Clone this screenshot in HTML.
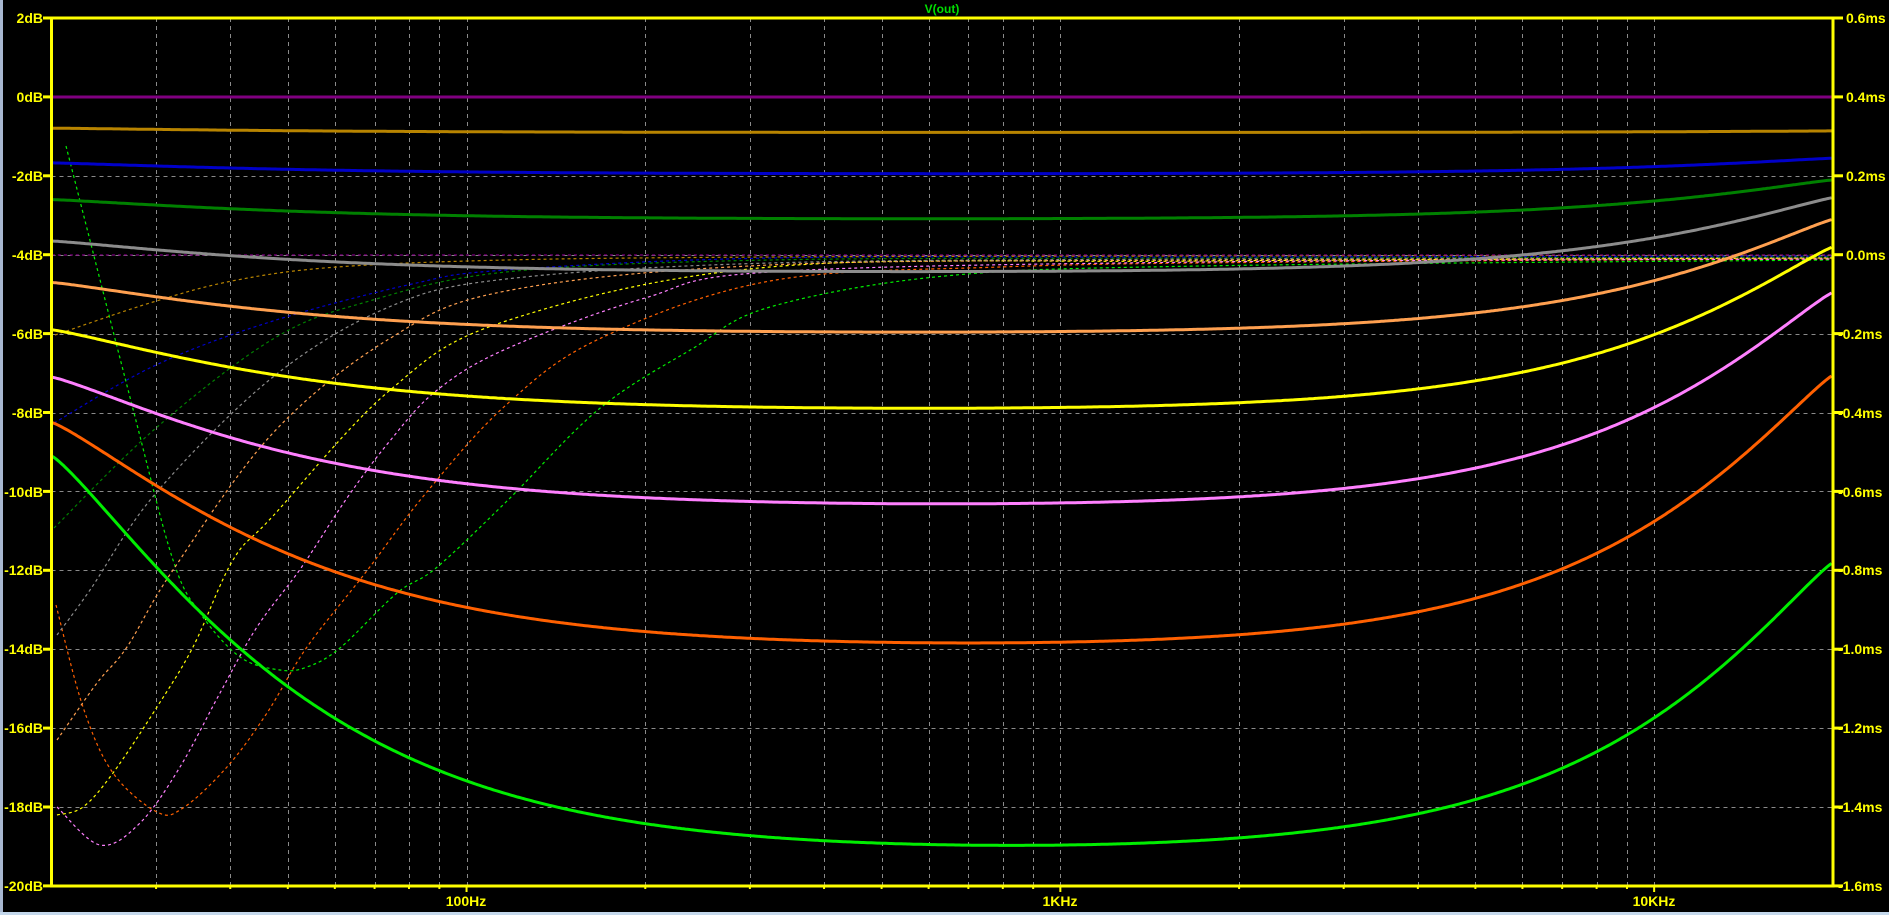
<!DOCTYPE html>
<html><head><meta charset="utf-8">
<style>
html,body{margin:0;padding:0;background:#000;width:1889px;height:915px;overflow:hidden}
svg{display:block}
text{font-family:"Liberation Sans",sans-serif;font-weight:bold}
</style></head><body>
<svg id="s" width="1889" height="915" viewBox="0 0 1889 915" xmlns="http://www.w3.org/2000/svg">
<rect width="1889" height="915" fill="#000"/>
<rect x="0" y="0" width="3" height="915" fill="#a8b8d0"/>
<rect x="0" y="912" width="1889" height="3" fill="#c4d8ec"/>
<g id="grid" stroke="#8a8a8a" stroke-width="1" stroke-dasharray="4 4"></g>
<g id="dash" fill="none" stroke-width="1.2" stroke-dasharray="3 3"></g>
<g id="solid" fill="none" stroke-width="3"></g>
<g id="axes" stroke="#ffff00" fill="none"></g>
<text x="942" y="13" fill="#00e000" font-size="12" text-anchor="middle">V(out)</text>
<text x="466" y="906" fill="#ffff00" font-size="14" text-anchor="middle">100Hz</text>
<text x="1060" y="906" fill="#ffff00" font-size="14" text-anchor="middle">1KHz</text>
<text x="1654" y="906" fill="#ffff00" font-size="14" text-anchor="middle">10KHz</text>
<g fill="#ffff00" font-size="14" text-anchor="end">
<text x="43" y="23">2dB</text><text x="43" y="102">0dB</text><text x="43" y="181">-2dB</text><text x="43" y="260">-4dB</text><text x="43" y="339">-6dB</text><text x="43" y="418">-8dB</text><text x="43" y="497">-10dB</text><text x="43" y="575">-12dB</text><text x="43" y="654">-14dB</text><text x="43" y="733">-16dB</text><text x="43" y="812">-18dB</text><text x="43" y="891">-20dB</text>
</g>
<g fill="#ffff00" font-size="14">
<text x="1846" y="23">0.6ms</text><text x="1846" y="102">0.4ms</text><text x="1846" y="181">0.2ms</text><text x="1846" y="260">0.0ms</text><text x="1838" y="339">-0.2ms</text><text x="1838" y="418">-0.4ms</text><text x="1838" y="497">-0.6ms</text><text x="1838" y="575">-0.8ms</text><text x="1838" y="654">-1.0ms</text><text x="1838" y="733">-1.2ms</text><text x="1838" y="812">-1.4ms</text><text x="1838" y="891">-1.6ms</text>
</g>
</svg>
<script>
var NS="http://www.w3.org/2000/svg";
var L=51.5,R=1833,T=18,B=886,D=593.8;
function X(f){return L+D*Math.log10(f/20);}
function el(p,t,a){var e=document.createElementNS(NS,t);for(var k in a)e.setAttribute(k,a[k]);document.getElementById(p).appendChild(e);return e;}
var fs=[];for(var dec=10;dec<=10000;dec*=10){for(var m=1;m<=9;m++){var f=m*dec;if(f>20&&f<20000)fs.push(f);}}
fs.forEach(function(f){var x=Math.round(X(f))+0.5;el("grid","line",{x1:x,y1:T,x2:x,y2:B});});
for(var i=1;i<11;i++){var y=Math.round(T+i*78.9)+0.5;el("grid","line",{x1:L,y1:y,x2:R,y2:y});}
el("axes","rect",{x:L,y:T,width:R-L,height:B-T,"stroke-width":3});
for(var i=0;i<=11;i++){var y=T+i*78.9;el("axes","line",{x1:43,y1:y,x2:L,y2:y,"stroke-width":3});el("axes","line",{x1:R,y1:y,x2:1843,y2:y,"stroke-width":3});}
fs.forEach(function(f){var x=X(f);var big=(f==100||f==1000||f==10000);el("axes","line",{x1:x,y1:B,x2:x,y2:B+(big?6:3),"stroke-width":2});});
function Y(db){return 97-39.45*db;}
function sl(x){return Math.exp(-Math.pow((x-L)/265,1.2));}
function sh(x){return Math.exp(-Math.pow((R-x)/225,1.15));}
var C=[["#800080",0,0,0],["#b88400",-0.79,-0.9,-0.86],["#0000c8",-1.67,-1.95,-1.55],["#008000",-2.6,-3.1,-2.1],["#8c8c8c",-3.65,-4.45,-2.55],["#ffa050",-4.7,-6.0,-3.1],["#ffff00",-5.9,-7.95,-3.8],["#ff80ff",-7.1,-10.4,-4.95],["#ff6000",-8.25,-13.97,-7.05],["#00ee00",-9.1,-19.15,-11.8]];
var P={
"#800080":[[52,255],[1833,255]],
"#b88400":[[55,335],[153,302],[237,280],[337,267],[506,260],[770,257],[1200,256],[1833,255]],
"#0000c8":[[54,423],[156,365],[273,321],[412,284],[506,270],[770,258],[1200,257],[1833,256]],
"#008000":[[54,528],[156,428],[273,339],[366,302],[506,272],[770,260],[1200,258],[1833,257]],
"#8c8c8c":[[57,635],[90,590],[156,493],[273,377],[389,307],[506,279],[770,263],[1200,259],[1833,257]],
"#ffa050":[[57,740],[97,683],[127,647],[173,570],[273,433],[389,339],[506,291],[770,265],[1200,260],[1833,258]],
"#ffff00":[[57,815],[83,807],[113,773],[157,707],[193,647],[233,560],[273,516],[389,391],[506,321],[770,267],[1200,261],[1833,258]],
"#ff80ff":[[57,807],[100,845],[140,823],[180,767],[220,693],[257,627],[301,568],[347,498],[389,442],[436,391],[506,349],[645,298],[770,272],[1200,262],[1833,259]],
"#ff6000":[[56,605],[83,707],[113,773],[157,812],[183,808],[227,767],[267,713],[307,647],[366,572],[426,493],[506,405],[599,339],[770,281],[1000,267],[1300,262],[1833,259]],
"#00ee00":[[66,146],[133,409],[173,560],[200,613],[240,657],[280,670],[307,667],[340,648],[397,593],[436,568],[506,502],[599,409],[692,349],[770,307],[945,276],[1200,266],[1833,260]]
};
function spline(p){var d="M"+p[0][0]+","+p[0][1];for(var i=0;i<p.length-1;i++){var p0=p[i-1]||p[i],p1=p[i],p2=p[i+1],p3=p[i+2]||p2;var c1x=p1[0]+(p2[0]-p0[0])/6,c1y=p1[1]+(p2[1]-p0[1])/6,c2x=p2[0]-(p3[0]-p1[0])/6,c2y=p2[1]-(p3[1]-p1[1])/6;d+=" C"+c1x.toFixed(1)+","+c1y.toFixed(1)+" "+c2x.toFixed(1)+","+c2y.toFixed(1)+" "+p2[0]+","+p2[1];}return d;}
C.slice().reverse().forEach(function(c){el("dash","path",{d:spline(P[c[0]]),stroke:c[0]});});
C.forEach(function(c){var d="";for(var x=L;x<=R;x+=2){var db=c[2]+(c[1]-c[2])*sl(x)+(c[3]-c[2])*sh(x);d+=(d?"L":"M")+x.toFixed(1)+","+Y(db).toFixed(1);}el("solid","path",{d:d,stroke:c[0]});});
</script>
</body></html>
